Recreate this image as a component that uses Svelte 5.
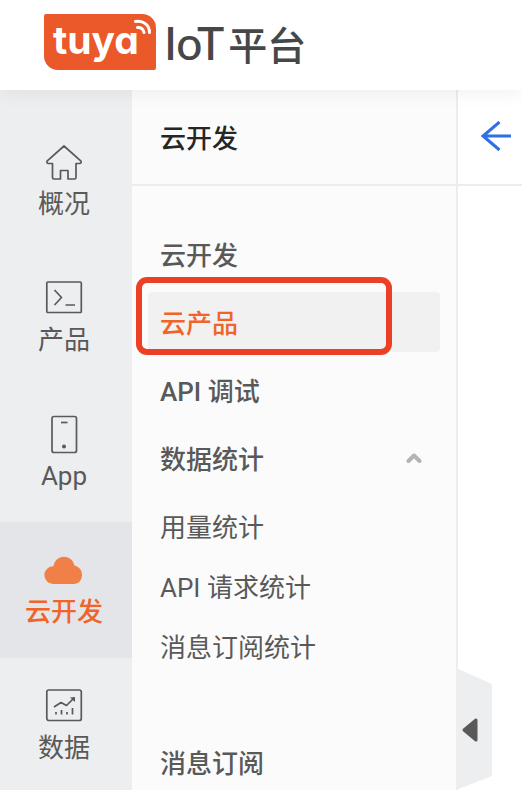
<script>
  const sections = [
    { id: 'home', label: '概况' },
    { id: 'product', label: '产品' },
    { id: 'app', label: 'App' },
    { id: 'cloud', label: '云开发' },
    { id: 'data', label: '数据' },
  ];

  const menu = [
    { label: '云开发' },
    { label: '云产品', marked: true },
    { label: 'API 调试' },
    { label: '数据统计', children: ['用量统计', 'API 请求统计', '消息订阅统计'] },
    { label: '消息订阅' },
  ];

  let section = $state('cloud');
  let current = $state('云产品');
  let expanded = $state(true);
  let collapsed = $state(false);

  function pick(event, apply) {
    event.preventDefault();
    apply();
  }
</script>

<div class="shell">
  <header class="topbar">
    <a class="brand" href="#home">
      <span class="badge">
        <span class="word">tuya</span>
        <svg class="waves" viewBox="0 0 18 16" aria-hidden="true">
          <path d="M1.5 2.500C9 1 15.500 6 15.500 13.500" />
          <path d="M3.500 8.500c3-.5 6 1.500 6.500 5" />
        </svg>
      </span>
      <span class="title"><span class="latin">IoT</span><span>平台</span></span>
    </a>
  </header>

  <div class="body">
    <nav class="rail" aria-label="主导航">
      {#each sections as item (item.id)}
        <a
          class="section"
          class:active={section === item.id}
          href={'#' + item.id}
          onclick={(e) => pick(e, () => (section = item.id))}
        >
          <svg viewBox="0 0 40 40" aria-hidden="true">
            {#if item.id === 'home'}
              <path d="M20 4 37 19.200q.8 2-1.500 2.300H32v14q0 1.500-1.500 1.500H24v-8.500h-7.500V37H10q-1.500 0-1.500-1.500v-14H4.500q-2-.3-1.500-2.300Z" />
            {:else if item.id === 'product'}
              <rect x="2.800" y="4" width="34.500" height="30.500" rx="1" />
              <path d="m10.500 12 7 7.500-7 7.500M21.500 27H31" />
            {:else if item.id === 'app'}
              <rect x="8" y="2.500" width="24.500" height="36" rx="2" />
              <path d="M17 8.500h6.500" />
              <circle class="solid" cx="20" cy="32.500" r="2" />
            {:else if item.id === 'cloud'}
              <path class="cloud" d="M9 34A8.700 8.700 0 0 1 9.500 16.200C10.500 10.500 14.500 6.800 20 6.800s9.500 3.700 10.300 8.700C35 16.500 38 20 38 25s-3.500 9-8 9Z" />
            {:else}
              <rect x="2.800" y="4" width="34.500" height="30.500" rx="2" />
              <path d="m10 21 7-4.500 5.500 3 6.500-6.500M12 28.500V26M17.500 28.500V24M23 28.500V26M28.500 28.500V22" />
              <path class="solid" d="m26 11.500 5-.5v5Z" />
            {/if}
          </svg>
          <span>{item.label}</span>
        </a>
      {/each}
    </nav>

    {#if !collapsed}
      <aside class="side">
        <h1>云开发</h1>
        <ul class="menu">
          {#each menu as item (item.label)}
            <li>
              {#if item.children}
                <button class="entry" aria-expanded={expanded} onclick={() => (expanded = !expanded)}>
                  {item.label}
                  <svg class="chevron" class:closed={!expanded} viewBox="0 0 16 12" aria-hidden="true">
                    <path d="m2.500 9 5.500-5.500L13.500 9" />
                  </svg>
                </button>
                {#if expanded}
                  <ul class="children">
                    {#each item.children as child (child)}
                      <li>
                        <a
                          class="entry child"
                          class:current={current === child}
                          href={'#' + child}
                          onclick={(e) => pick(e, () => (current = child))}>{child}</a
                        >
                      </li>
                    {/each}
                  </ul>
                {/if}
              {:else}
                <a
                  class="entry"
                  class:current={current === item.label}
                  href={'#' + item.label}
                  onclick={(e) => pick(e, () => (current = item.label))}>{item.label}</a
                >
                {#if item.marked}<span class="marker"></span>{/if}
              {/if}
            </li>
          {/each}
        </ul>
      </aside>
    {/if}

    <main>
      <div class="pagehead">
        <button class="back" aria-label="返回">
          <svg viewBox="0 0 32 32" aria-hidden="true"><path d="M19.500 1 3 15l16.500 14M2.500 15H31" /></svg>
        </button>
      </div>
      <button class="handle" aria-label="收起菜单" onclick={() => (collapsed = !collapsed)}>
        <svg viewBox="0 0 36 122" aria-hidden="true">
          <path class="tab" d="M0 0 36 16v92L0 122Z" />
          <path class="tri" d="M8 62 20 52v20Z" />
        </svg>
      </button>
    </main>
  </div>
</div>

<style>
  :global(body) {
    margin: 0;
  }

  .shell {
    display: flex;
    flex-direction: column;
    height: 100vh;
    overflow: hidden;
    background: #fff;
    color: #595959;
    font-family: Roboto, 'Noto Sans CJK SC', sans-serif;
    font-size: 26px;
  }

  a {
    color: inherit;
    text-decoration: none;
  }

  button {
    border: 0;
    padding: 0;
    background: none;
    color: inherit;
    font: inherit;
    cursor: pointer;
  }

  svg {
    display: block;
    fill: none;
    stroke: currentColor;
  }

  .topbar {
    position: relative;
    z-index: 1;
    flex: none;
    box-sizing: border-box;
    height: 90px;
    padding: 14px 44px;
    background: #fff;
    box-shadow: 0 0 20px rgba(0, 0, 0, 0.08);
  }

  .brand {
    display: flex;
    align-items: flex-start;
    gap: 8px;
    width: max-content;
  }

  .badge {
    position: relative;
    box-sizing: border-box;
    width: 112px;
    height: 56px;
    padding-left: 9px;
    border-radius: 2px 14px 2px 14px;
    background: #eb5829;
    color: #fff;
  }

  .word {
    font-family: Inter, sans-serif;
    font-feature-settings: 'cv11';
    font-size: 39px;
    font-weight: 700;
    line-height: 52px;
  }

  .waves {
    position: absolute;
    top: 5px;
    right: 4px;
    width: 18px;
    height: 16px;
    stroke-width: 3;
    stroke-linecap: round;
  }

  .title {
    display: flex;
    align-items: baseline;
    gap: 4px;
    color: #474747;
    font-family: 'Noto Sans CJK SC', sans-serif;
    font-size: 39px;
    font-weight: 500;
    line-height: 58px;
    white-space: nowrap;
  }

  .latin {
    font-family: Lato, sans-serif;
    font-size: 46px;
  }

  .body {
    display: flex;
    flex: 1;
    min-height: 0;
  }

  .rail {
    flex: none;
    box-sizing: border-box;
    width: 132px;
    padding-top: 24px;
    overflow: hidden;
    background: #edeef0;
  }

  .section {
    display: flex;
    flex-direction: column;
    align-items: center;
    gap: 2px;
    box-sizing: border-box;
    height: 136px;
    padding-top: 28px;
    padding-right: 4px;
    line-height: 40px;
  }

  .section svg {
    flex: none;
    width: 40px;
    height: 40px;
    stroke-width: 1.700;
    stroke-linejoin: round;
  }

  .section .solid {
    fill: currentColor;
    stroke: none;
  }

  .section .cloud {
    fill: #f08047;
    stroke: none;
  }

  .section.active {
    background: #e4e5e9;
    color: #f0642a;
    font-weight: 500;
  }

  .side {
    flex: 0 0 324px;
    overflow: hidden;
    border-right: 2px solid #ededee;
    background: #fbfbfb;
  }

  h1 {
    margin: 0;
    padding: 4px 0 0 28px;
    border-bottom: 2px solid #ededed;
    color: #262626;
    font-size: 26px;
    font-weight: 500;
    line-height: 90px;
  }

  ul {
    margin: 0;
    padding: 0;
    list-style: none;
  }

  .menu {
    display: flex;
    flex-direction: column;
    gap: 8px;
    padding: 38px 16px 0;
  }

  .menu > li {
    position: relative;
  }

  .children {
    padding: 8px 0 48px;
  }

  .entry {
    display: flex;
    align-items: center;
    justify-content: space-between;
    box-sizing: border-box;
    width: 100%;
    height: 60px;
    padding: 0 18px 2px 12px;
    border-radius: 4px;
    font-weight: 500;
    white-space: pre;
  }

  .child {
    font-weight: 400;
  }

  .current {
    background: #f1f1f1;
    color: #f0642a;
  }

  .marker {
    position: absolute;
    top: -15px;
    left: -12px;
    box-sizing: border-box;
    width: 256px;
    height: 78px;
    border: 6px solid #ec4026;
    border-radius: 11px;
    pointer-events: none;
  }

  .chevron {
    width: 16px;
    height: 12px;
    margin-top: 2px;
    color: #b3b3b3;
    stroke-width: 4;
    stroke-linecap: round;
    stroke-linejoin: round;
  }

  .chevron.closed {
    transform: rotate(180deg);
  }

  main {
    position: relative;
    flex: 1;
    min-width: 0;
  }

  .pagehead {
    display: flex;
    align-items: center;
    height: 94px;
    padding-left: 22px;
    border-bottom: 2px solid #ededed;
  }

  .back svg {
    width: 32px;
    height: 32px;
    color: #2f6fe4;
    stroke-width: 3;
  }

  .handle {
    position: absolute;
    bottom: 0;
    left: -2px;
  }

  .handle svg {
    width: 36px;
    height: 122px;
    stroke: none;
  }

  .tab {
    fill: #edeef0;
  }

  .handle .tri {
    fill: #595959;
    stroke: #595959;
    stroke-width: 3;
    stroke-linejoin: round;
  }
</style>
